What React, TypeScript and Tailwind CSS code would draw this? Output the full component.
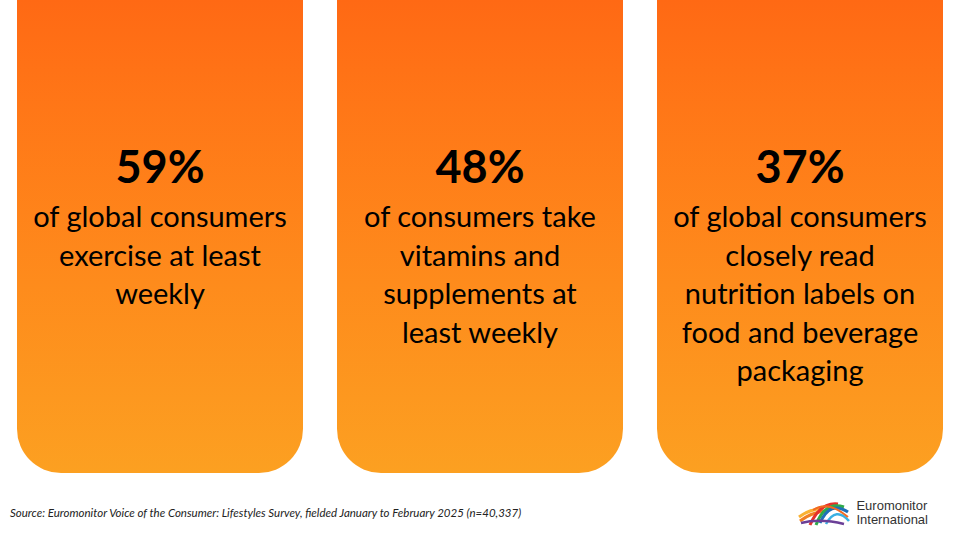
import React from 'react';

const stats = [
  { value: '59%', lines: ['of global consumers', 'exercise at least', 'weekly'] },
  { value: '48%', lines: ['of consumers take', 'vitamins and', 'supplements at', 'least weekly'] },
  { value: '37%', lines: ['of global consumers', 'closely read', 'nutrition labels on', 'food and beverage', 'packaging'] },
];

function StatCard({ value, lines }: { value: string; lines: string[] }) {
  return (
    <div className="w-[286px] h-[473px] rounded-b-[44px] bg-gradient-to-b from-[#ff6914] to-[#fca021] flex flex-col items-center pt-[142px] text-black">
      <div className="text-[45px] leading-[48px] font-bold">{value}</div>
      <div className="mt-[7px] text-[29px] leading-[38.5px] text-center">
        {lines.map((l) => (
          <div key={l}>{l}</div>
        ))}
      </div>
    </div>
  );
}

function Logo() {
  return (
    <div className="flex items-center gap-[6px]">
      <svg width="52" height="26" viewBox="0 0 52 26">
        {/* left sweeping bands */}
        <path d="M1 17 Q12 9 26 8" stroke="#f9b233" strokeWidth="3" fill="none" />
        <path d="M2 21 Q14 12 28 11" stroke="#f07f22" strokeWidth="3" fill="none" />
        {/* arches */}
        <path d="M12 25 Q22 2 40 4" stroke="#e4312b" strokeWidth="3" fill="none" />
        <path d="M18 25 Q27 1 46 7" stroke="#2faa4b" strokeWidth="3" fill="none" />
        <path d="M22 23 Q32 0 50 12" stroke="#1f6fb8" strokeWidth="3" fill="none" />
        <path d="M28 24 Q38 6 51 21" stroke="#3ab0e2" strokeWidth="2.5" fill="none" />
        <path d="M15 10 Q30 0 50 17" stroke="#f26a21" strokeWidth="2" fill="none" />
        {/* bottom band */}
        <path d="M3 23 Q22 18 46 24" stroke="#6b3f97" strokeWidth="2.5" fill="none" />
      </svg>
      <div className="text-[13px] leading-[14px] text-[#333] font-['Liberation_Sans',sans-serif]">
        <div>Euromonitor</div>
        <div>International</div>
      </div>
    </div>
  );
}

export default function App() {
  return (
    <div className="w-[960px] h-[540px] bg-white overflow-hidden flex flex-col font-['Lato',sans-serif]">
      <div className="flex gap-[34px] pl-[17px]">
        {stats.map((s) => (
          <StatCard key={s.value} value={s.value} lines={s.lines} />
        ))}
      </div>
      <div className="flex items-center justify-between pl-[10px] pr-[32px] mt-[26px]">
        <div className="text-[11.5px] italic text-[#222]">
          Source: Euromonitor Voice of the Consumer: Lifestyles Survey, fielded January to February 2025 (n=40,337)
        </div>
        <Logo />
      </div>
    </div>
  );
}
